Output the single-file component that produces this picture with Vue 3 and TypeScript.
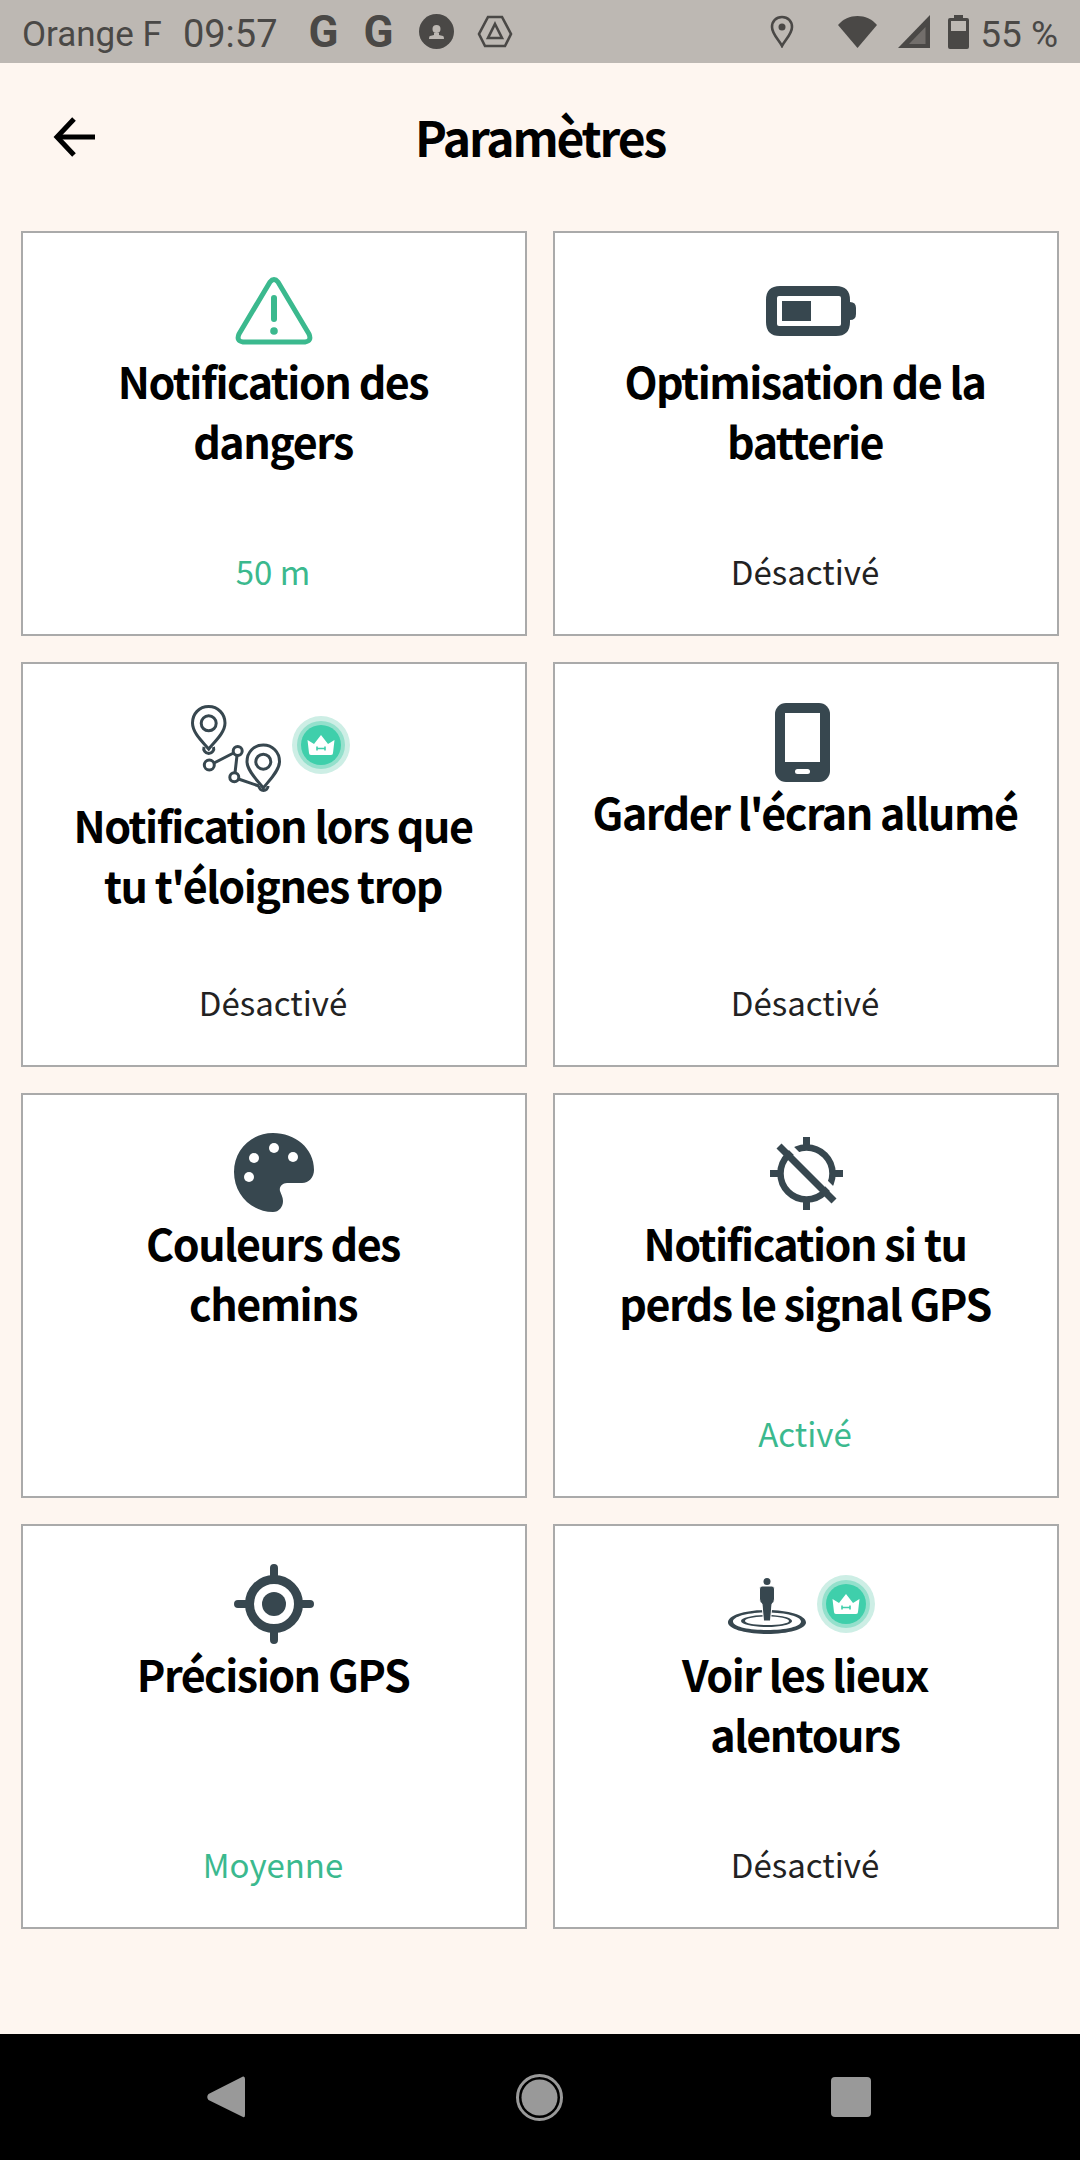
<template>
  <div class="page">
    <div class="status-bar">
      <span class="status-text">Orange F</span>
      <span class="status-text clock">09:57</span>
      <span class="g-icon first">G</span>
      <span class="g-icon">G</span>
      <svg class="face" width="35" height="35" viewBox="0 0 35 35">
        <circle cx="17.5" cy="17.5" r="17.5" fill="#4a4846" />
        <circle cx="17.5" cy="15" r="4" fill="#bdb8b3" />
        <path d="M15 19 h5 v2 l4 1 q1 0 1 3 H10 q0-3 1-3 l4-1z" fill="#bdb8b3" />
      </svg>
      <svg class="drive" width="36" height="33" viewBox="0 0 36 33" fill="none" stroke="#4a4846" stroke-width="2.6">
        <path d="M11 2 h14 l9 17 -6 12 H8 L2 19z" />
        <path d="M18 9 l7 14 H11z" />
      </svg>
      <div class="status-right">
        <svg width="24" height="33" viewBox="0 0 24 33" fill="none">
          <path d="M12 2 C6 2 2 6.500 2 12 C2 19 9 25 12 31 C15 25 22 19 22 12 C22 6.500 18 2 12 2z" stroke="#4a4846" stroke-width="2.6" />
          <circle cx="12" cy="12" r="3.500" fill="#4a4846" />
        </svg>
        <svg class="wifi" width="39" height="32" viewBox="0 0 39 32">
          <path d="M19.500 32 L0 9 C5 3 12 0 19.500 0 C27 0 34 3 39 9z" fill="#4a4846" />
        </svg>
        <svg class="signal" width="32" height="33" viewBox="0 0 32 33">
          <path d="M0 33 L32 0 V33z" fill="#4a4846" />
          <path d="M27.500 12 V29 H11z" fill="#bdb8b3" opacity="0.35" />
        </svg>
        <svg class="batt" width="21" height="34" viewBox="0 0 21 34">
          <path d="M6 0 h9 v3 h4 q2 0 2 2 v27 q0 2-2 2 H2 q-2 0-2-2 V5 q0-2 2-2 h4z" fill="#4a4846" />
          <rect x="3" y="6" width="15" height="10" fill="#bdb8b3" />
        </svg>
        <span class="status-text pct">55 %</span>
      </div>
    </div>

    <header class="top-bar">
      <svg class="back" width="42" height="40" viewBox="0 0 42 40" fill="none" stroke="#000" stroke-width="5">
        <path d="M42 20 H4" />
        <path d="M21 2 L4 20 L21 38" />
      </svg>
      <h1>Paramètres</h1>
    </header>

    <main class="grid">
      <section v-for="card in cards" :key="card.title" class="card">
        <div class="icon-row" :class="{ tall: card.icon === 'route' }">
          <svg v-if="card.icon === 'warning'" width="78" height="68" viewBox="0 0 78 68" fill="none">
            <path d="M35 5 L4 57 Q1 64 8 65 H70 Q77 64 74 57 L43 5 Q39 0 35 5z" stroke="#3bb98e" stroke-width="5" stroke-linejoin="round" />
            <path d="M39 21 V42" stroke="#3bb98e" stroke-width="6" stroke-linecap="round" />
            <circle cx="39" cy="54" r="3.800" fill="#3bb98e" />
          </svg>

          <svg v-else-if="card.icon === 'battery'" class="shift" width="90" height="50" viewBox="0 0 90 50">
            <path d="M14 0 H70 Q84 0 84 14 V16 Q90 16 90 22 V28 Q90 34 84 34 V36 Q84 50 70 50 H14 Q0 50 0 36 V14 Q0 0 14 0z" fill="#37474f" />
            <rect x="11" y="10" width="64" height="30" rx="2" fill="#fff" />
            <rect x="16" y="15" width="29" height="20" fill="#37474f" />
          </svg>

          <template v-else-if="card.icon === 'route'">
            <svg class="route" width="90" height="87" viewBox="0 0 90 87" fill="none" stroke="#37474f" stroke-width="3">
              <path d="M17.700 1.500 C8 1.500 1.500 9 1.500 18 C1.500 28 12 37 17.700 44 C23 37 34 28 34 18 C34 9 27 1.500 17.700 1.500z" />
              <circle cx="17.700" cy="18.300" r="7.500" />
              <path d="M13 42 A5 5 0 1 0 22.500 42" />
              <circle cx="18.300" cy="60" r="5" />
              <circle cx="46.700" cy="46" r="4.500" />
              <circle cx="43.300" cy="72.300" r="4.500" />
              <path d="M23 58 L42.500 48 M46 50.500 L44 68 M47.500 74 L68 81" />
              <path d="M72.300 40 C63 40 56 47 56 56.500 C56 66 67 76 72.300 83 C77.500 76 88.500 66 88.500 56.500 C88.500 47 81.500 40 72.300 40z" />
              <circle cx="72.300" cy="56.700" r="7.500" />
              <path d="M68 81 A4.500 4.500 0 0 0 77 81" />
            </svg>
            <svg class="badge route-badge" width="58" height="58" viewBox="0 0 58 58">
              <circle cx="29" cy="29" r="29" fill="#cdeee5" />
              <circle cx="29" cy="29" r="24" fill="#94e0cc" />
              <circle cx="29" cy="29" r="20" fill="#3fcfab" />
              <path d="M15.500 24 L22 28 L29 19 L36 28 L42.500 24 L41 37 Q41 39 39 39 H19 Q17 39 17 37z" fill="#fff" />
              <path d="M25 32.500 H33 M25 30.500 V34.500 M33 30.500 V34.500" stroke="#3fcfab" stroke-width="1.600" />
            </svg>
          </template>

          <svg v-else-if="card.icon === 'phone'" class="phone" width="55" height="79" viewBox="0 0 55 79">
            <rect width="55" height="79" rx="11" fill="#37474f" />
            <rect x="10" y="10" width="35" height="49" fill="#fff" />
            <rect x="20" y="66" width="15" height="5" rx="2.500" fill="#fff" />
          </svg>

          <svg v-else-if="card.icon === 'palette'" width="80" height="80" viewBox="0 0 80 80">
            <path d="M39 0 C61 0 80 15 80 37 C80 44 75 50 68 50 H53 C48 50 45 54 46 58 C47 61 49 64 49 68 C49 74 45 79 39 79 C17 79 0 61 0 39 C0 17 17 0 39 0z" fill="#37474f" />
            <circle cx="40" cy="15" r="5" fill="#fff" />
            <circle cx="20" cy="25" r="5" fill="#fff" />
            <circle cx="59" cy="24" r="5" fill="#fff" />
            <circle cx="15" cy="44" r="5" fill="#fff" />
          </svg>

          <svg v-else-if="card.icon === 'gps-off'" width="73" height="73" viewBox="0 0 73 73" fill="none" stroke="#37474f">
            <circle cx="36.500" cy="36.500" r="26" stroke-width="6.500" />
            <path d="M36.500 0 V10 M36.500 63 V73 M0 36.500 H10 M63 36.500 H73" stroke-width="7" />
            <path d="M14 4 L69 59" stroke="#fff" stroke-width="6" />
            <path d="M9 9 L64 64" stroke-width="7" />
          </svg>

          <svg v-else-if="card.icon === 'gps'" width="80" height="80" viewBox="0 0 80 80" fill="none" stroke="#37474f">
            <circle cx="40" cy="40" r="24.500" stroke-width="9" />
            <circle cx="40" cy="40" r="12" fill="#37474f" stroke="none" />
            <path d="M40 4 V14 M40 66 V76 M4 40 H14 M66 40 H76" stroke-width="8" stroke-linecap="round" />
          </svg>

          <template v-else-if="card.icon === 'person'">
            <svg class="person" width="78" height="56" viewBox="0 0 78 56">
              <path fill-rule="evenodd" d="M39 32 C60 32 78 37 78 44.500 C78 51 60 56 39 56 C18 56 0 51 0 44.500 C0 37 18 32 39 32z M39 34.500 C20 34.500 5 38.500 5 43.500 C5 48.500 20 52 39 52 C58 52 73 48.500 73 43.500 C73 38.500 58 34.500 39 34.500z" fill="#37474f" />
              <path fill-rule="evenodd" d="M39 37 C52 37 64 39.500 64 43 C64 46.500 52 49 39 49 C26 49 13 46.500 13 43 C13 39.500 26 37 39 37z M39 38.500 C27 38.500 17 40.500 17 43 C17 45.500 27 47 39 47 C51 47 61 45.500 61 43 C61 40.500 51 38.500 39 38.500z" fill="#37474f" />
              <path d="M34 8 H44 Q46.500 8 46.500 11 V21 Q46.500 24 44 26 L42.500 43 H35.500 L34 26 Q31.500 24 31.500 21 V11 Q31.500 8 34 8z" fill="#37474f" stroke="#fff" stroke-width="1" />
              <circle cx="39" cy="3.500" r="3.500" fill="#37474f" />
            </svg>
            <svg class="badge person-badge" width="58" height="58" viewBox="0 0 58 58">
              <circle cx="29" cy="29" r="29" fill="#cdeee5" />
              <circle cx="29" cy="29" r="24" fill="#94e0cc" />
              <circle cx="29" cy="29" r="20" fill="#3fcfab" />
              <path d="M15.500 24 L22 28 L29 19 L36 28 L42.500 24 L41 37 Q41 39 39 39 H19 Q17 39 17 37z" fill="#fff" />
              <path d="M25 32.500 H33 M25 30.500 V34.500 M33 30.500 V34.500" stroke="#3fcfab" stroke-width="1.600" />
            </svg>
          </template>
        </div>

        <h2>{{ card.title }}</h2>
        <p v-if="card.value" class="value" :class="{ on: card.on }">{{ card.value }}</p>
      </section>
    </main>

    <nav class="nav-bar">
      <svg width="38" height="42" viewBox="0 0 38 42">
        <path d="M36 0.500 Q38 0 38 3 V39 Q38 42 36 41 L1.500 24 Q-1 21 1.500 18z" fill="#999" />
      </svg>
      <svg width="47" height="47" viewBox="0 0 47 47">
        <circle cx="23.500" cy="23.500" r="22" fill="none" stroke="#999" stroke-width="3" />
        <circle cx="23.500" cy="23.500" r="18" fill="#999" />
      </svg>
      <svg width="40" height="40" viewBox="0 0 40 40">
        <rect width="40" height="40" rx="4" fill="#999" />
      </svg>
    </nav>
  </div>
</template>

<script setup lang="ts">
interface SettingCard {
  icon: string
  title: string
  value?: string
  on?: boolean
}

const cards: SettingCard[] = [
  { icon: 'warning', title: 'Notification des\ndangers', value: '50 m', on: true },
  { icon: 'battery', title: 'Optimisation de la\nbatterie', value: 'Désactivé' },
  { icon: 'route', title: "Notification lors que\ntu t'éloignes trop", value: 'Désactivé' },
  { icon: 'phone', title: "Garder l'écran allumé", value: 'Désactivé' },
  { icon: 'palette', title: 'Couleurs des\nchemins' },
  { icon: 'gps-off', title: 'Notification si tu\nperds le signal GPS', value: 'Activé', on: true },
  { icon: 'gps', title: 'Précision GPS', value: 'Moyenne', on: true },
  { icon: 'person', title: 'Voir les lieux\nalentours', value: 'Désactivé' },
]
</script>

<style>
html,
body {
  margin: 0;
  background: #fef6f0;
}
</style>

<style scoped>
.page {
  width: 1080px;
  height: 2160px;
  display: flex;
  flex-direction: column;
  background: #fef6f0;
  font-family: "Noto Sans CJK JP", "Noto Sans", sans-serif;
}

.status-bar {
  height: 63px;
  flex: none;
  display: flex;
  align-items: center;
  padding: 0 22px;
  box-sizing: border-box;
  background: #bdb8b3;
}

.status-text {
  font-family: Roboto, sans-serif;
  font-size: 35px;
  color: #4a4846;
  white-space: nowrap;
  margin-top: 5px;
}

.clock {
  margin-left: 21px;
  font-size: 38px;
}

.g-icon {
  font-family: Roboto, sans-serif;
  font-size: 44px;
  line-height: 44px;
  font-weight: 700;
  color: #4a4846;
  margin-right: 25px;
}

.g-icon.first {
  margin-left: 31px;
}

.face {
  margin-right: 23px;
}

.status-right {
  margin-left: auto;
  display: flex;
  align-items: center;
}

.wifi {
  margin-left: 44px;
}

.signal {
  margin-left: 21px;
}

.batt {
  margin-left: 18px;
}

.pct {
  margin-left: 11px;
  font-size: 37px;
}

.top-bar {
  height: 146px;
  flex: none;
  position: relative;
  display: flex;
  align-items: center;
  justify-content: center;
  margin-bottom: 22px;
}

.back {
  position: absolute;
  left: 53px;
  top: 54px;
}

h1 {
  margin: 0;
  font-size: 48px;
  font-weight: 700;
  letter-spacing: -2.2px;
  line-height: 60px;
  color: #000;
}

.grid {
  display: grid;
  grid-template-columns: 506px 506px;
  grid-auto-rows: 405px;
  column-gap: 26px;
  row-gap: 26px;
  padding: 0 21px;
}

.card {
  box-sizing: border-box;
  border: 2px solid #aaa;
  background: #fff;
  display: flex;
  flex-direction: column;
  align-items: center;
  padding: 39px 0 39px;
}

.icon-row {
  height: 78px;
  flex: none;
  display: flex;
  align-items: center;
  justify-content: center;
}

.icon-row.tall {
  height: 91px;
}

.shift {
  margin-left: 10px;
}

.badge {
  margin-left: 11px;
}

.route {
  margin-left: -8px;
}

.route-badge {
  margin-top: -8px;
}

.phone {
  margin-right: 7px;
}

.person {
  margin-top: 4px;
  margin-left: -10px;
}

.person-badge {
  margin-left: 11px;
}

h2 {
  margin: 0;
  padding-right: 2px;
  font-size: 43px;
  font-weight: 700;
  letter-spacing: -1.5px;
  line-height: 60px;
  text-align: center;
  color: #000;
  white-space: pre-line;
}

.value {
  margin: auto 2px 0 0;
  font-size: 33px;
  line-height: 48px;
  color: #222;
}

.value.on {
  color: #3bb98e;
}

.nav-bar {
  margin-top: auto;
  height: 126px;
  flex: none;
  background: #000;
  display: flex;
  align-items: center;
  padding-left: 207px;
  box-sizing: border-box;
}

.nav-bar svg:nth-child(2) {
  margin-left: 271px;
}

.nav-bar svg:nth-child(3) {
  margin-left: 268px;
}
</style>
